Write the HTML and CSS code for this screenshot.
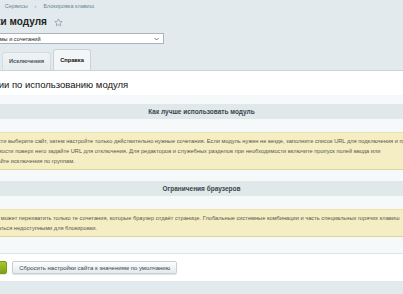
FILE: index.html
```html
<!DOCTYPE html>
<html lang="ru">
<head>
  <meta charset="UTF-8">
  <meta name="viewport" content="width=device-width, initial-scale=1.0">
  <title>Настройки модуля</title>
  <link rel="stylesheet" href="styles.css">
</head>
<body>
  <div class="page">
    <div class="crumbs">
      <a>Настройки</a><span class="sep">›</span><a>Сервисы</a><span class="sep">›</span><a>Блокировка клавиш</a>
    </div>

    <div class="title-row">
      <h1 class="title">Настройки модуля</h1>
      <svg class="star" width="9" height="9" viewBox="0 0 24 24">
        <path d="M12 2.5l2.9 6.2 6.8.8-5 4.7 1.3 6.7L12 17.6l-6 3.3 1.3-6.7-5-4.7 6.8-.8z" fill="none" stroke="#8d9ca5" stroke-width="2" stroke-linejoin="round"/>
      </svg>
    </div>

    <div class="site-select">
      <span>Набор схемы и сочетаний</span>
      <svg width="5" height="4" viewBox="0 0 10 6">
        <path d="M1 1l4 4 4-4" fill="none" stroke="#555" stroke-width="1.6"/>
      </svg>
    </div>

    <div class="tabs">
      <a class="tab">Настройки</a>
      <a class="tab">Исключения</a>
      <a class="tab active">Справка</a>
    </div>

    <div class="panel">
      <h2 class="panel-title">Инструкции по использованию модуля</h2>

      <div class="content">
        <div class="section">
          <div class="section-head">Как лучше использовать модуль</div>
          <div class="note">
            В этой части выберите сайт, затем настройте только действительно нужные сочетания. Если модуль нужен не везде, заполните список URL для подключения и при необходимости поверх него задайте URL для отключения. Для редакторов и служебных разделов при необходимости включите пропуск полей ввода или настраивайте исключения по группам.
          </div>
        </div>

        <div class="section">
          <div class="section-head">Ограничения браузеров</div>
          <div class="note">
            Сценарий может перехватить только те сочетания, которые браузер отдаёт странице. Глобальные системные комбинации и часть специальных горячих клавиш могут остаться недоступными для блокировки.
          </div>
        </div>
      </div>

      <div class="buttons">
        <button class="btn btn-save">Сохранить</button>
        <button class="btn">Сбросить настройки сайта к значениям по умолчанию</button>
      </div>
    </div>
  </div>
</body>
</html>
```

FILE: styles.css
```css
body {
  margin: 0;
  padding: 0;
  font-family: 'Liberation Sans', Arial, sans-serif;
  background: #e2eaed;
  color: #000;
  overflow: hidden;
}

.page {
  margin: 0 -50px;
}

.crumbs {
  padding: 2px 0 0 12px;
  font-size: 5.5px;
  line-height: 8px;
  color: #6a8593;
  white-space: nowrap;
}

.crumbs .sep {
  margin: 0 7px;
  color: #8a9ca6;
}

.title-row {
  display: flex;
  align-items: center;
  gap: 7px;
  margin-top: 6px;
  padding-left: 4px;
}

.title {
  margin: 0;
  font-size: 10px;
  line-height: 12px;
  font-weight: bold;
  color: #222;
}

.site-select {
  display: flex;
  align-items: center;
  justify-content: space-between;
  width: 210px;
  height: 11px;
  margin: 5px 0 0 4px;
  padding: 0 4px 0 18px;
  background: #fff;
  border: 1px solid #a8b6bc;
  font-size: 5.6px;
  color: #222;
  box-sizing: border-box;
}

.tabs {
  display: flex;
  align-items: flex-end;
  gap: 2px;
  height: 22px;
  margin-top: 4px;
  padding-left: 6px;
}

.tab {
  height: 17px;
  line-height: 17px;
  padding: 0 6px;
  font-size: 5.7px;
  font-weight: bold;
  color: #4a565c;
  background: linear-gradient(#eef3f4, #e6edef);
  border: 1px solid #d2dbde;
  border-bottom: none;
  border-radius: 3px 3px 0 0;
}

.tab.active {
  height: 20px;
  line-height: 20px;
  color: #111;
  background: #f2f6f7;
  border-color: #c9d3d7;
}

.panel {
  background: #fff;
  border-top: 1px solid #cbd5d9;
}

.panel-title {
  margin: 0;
  padding: 9px 0 5px 8px;
  font-size: 9.5px;
  line-height: 10px;
  font-weight: normal;
  color: #111;
}

.content {
  background: #f5f9f9;
  padding: 9px 0 16px;
}

.section + .section {
  margin-top: 11px;
}

.section-head {
  height: 15px;
  line-height: 15px;
  text-align: center;
  background: #e0e8ea;
  font-size: 6.5px;
  font-weight: bold;
  color: #3a444a;
}

.note {
  margin: 13px 8px 0;
  padding: 3px 36px 3px 15px;
  background: #f5eec4;
  border-top: 1px solid #ebe2b0;
  border-bottom: 1px solid #ddd39e;
  font-size: 5.7px;
  line-height: 10px;
  color: #59564a;
}

.buttons {
  display: flex;
  gap: 5px;
  padding: 7px 11px;
  background: #fff;
  border-top: 1px solid #dde5e8;
}

.btn {
  height: 13px;
  padding: 0 6px;
  font-family: inherit;
  font-size: 6px;
  color: #3a464d;
  background: linear-gradient(#fdfefe, #e4eaec);
  border: 1px solid #c7d0d4;
  border-radius: 2px;
  box-shadow: 0 1px 1px rgba(0, 0, 0, 0.12);
}

.btn-save {
  color: #fff;
  font-weight: bold;
  background: linear-gradient(#a5c92a, #7da01a);
  border-color: #7a9c1a;
}
```
